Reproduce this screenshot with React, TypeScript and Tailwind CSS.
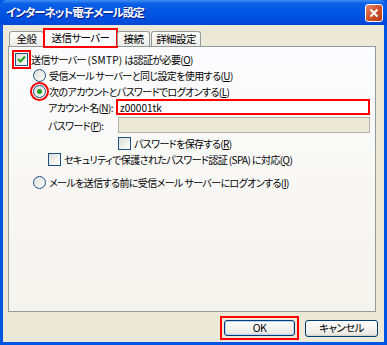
import React from "react";

const font = "font-['Noto_Sans_CJK_JP','Noto_Sans',sans-serif] [font-feature-settings:'palt']";

const Check = ({ checked = false }: { checked?: boolean }) => (
  <span className="w-[13px] h-[13px] border border-[#1c5180] bg-[linear-gradient(135deg,#dcdcd7,#ffffff)] flex items-center justify-center shrink-0">
    {checked && (
      <svg width="9" height="9" viewBox="0 0 9 9">
        <path d="M1 4 L3.5 6.5 L8 1.5" stroke="#21a121" strokeWidth="2" fill="none" />
      </svg>
    )}
  </span>
);

const Radio = ({ checked = false }: { checked?: boolean }) => (
  <span className="w-[13px] h-[13px] rounded-full border border-[#1c5180] bg-[linear-gradient(135deg,#dcdcd7,#ffffff)] flex items-center justify-center shrink-0">
    {checked && <span className="w-[5px] h-[5px] rounded-full bg-[#21a121]" />}
  </span>
);

export default function App() {
  return (
    <div className={`w-[387px] h-[345px] bg-[#0054e3] flex flex-col text-[10px] tracking-[-0.6px] text-black whitespace-nowrap ${font}`}>
      {/* title bar */}
      <div className="h-[25px] shrink-0 flex items-center justify-between pl-[6px] pr-[4px] rounded-t-[7px] bg-[linear-gradient(to_bottom,#3d8df7,#0a5fe6_15%,#0054e3_55%,#0048d8)]">
        <span className="text-white font-bold text-[11.5px] tracking-[-1px] [text-shadow:1px_1px_#0a1883]">
          インターネット電子メール設定
        </span>
        <span className="w-[18px] h-[18px] rounded-[3px] border border-white bg-[linear-gradient(135deg,#e8886a,#d2512d_50%,#b53a16)] flex items-center justify-center">
          <svg width="10" height="10" viewBox="0 0 10 10">
            <path d="M1.5 1.5 L8.5 8.5 M8.5 1.5 L1.5 8.5" stroke="white" strokeWidth="2" />
          </svg>
        </span>
      </div>

      {/* body */}
      <div className="flex-1 mx-[3px] mb-[3px] bg-[#ece9d8] flex flex-col pl-[5px] pr-[8px] pt-[4px]">
        {/* tabs */}
        <div className="flex items-end h-[17px] pl-[1px] relative z-10 text-[10.5px]">
          <div className="w-[35px] h-[15px] flex items-center justify-center border border-b-0 border-[#919b9c] rounded-t-[3px] bg-[linear-gradient(to_bottom,#ffffff,#ecebe6)]">全般</div>
          <div className="w-[73px] h-[18px] -mb-[1px] flex items-center justify-center bg-[#fcfcfe] outline-2 outline-[#ff0000] -outline-offset-1">送信サーバー</div>
          <div className="w-[33px] h-[15px] flex items-center justify-center border border-b-0 border-[#919b9c] rounded-t-[3px] bg-[linear-gradient(to_bottom,#ffffff,#ecebe6)]">接続</div>
          <div className="w-[50px] h-[15px] ml-[1px] flex items-center justify-center border border-b-0 border-[#919b9c] rounded-t-[3px] bg-[linear-gradient(to_bottom,#ffffff,#ecebe6)]">詳細設定</div>
        </div>

        {/* panel */}
        <div className="h-[266px] border border-[#919b9c] bg-[linear-gradient(to_bottom,#fcfcfe,#f4f3ee)] flex flex-col pt-[4px]">
          <div className="h-[16px] flex items-center pl-[4px]">
            <span className="p-[2px] outline-2 outline-[#ff0000] -outline-offset-1 flex">
              <Check checked />
            </span>
            <span className="ml-[1px]">送信サーバー <span className="tracking-[0.3px]">(SMTP)</span> は認証が必要(<u>O</u>)</span>
          </div>
          <div className="h-[16px] flex items-center gap-[3px] pl-[24px]">
            <Radio />
            <span>受信メール サーバーと同じ設定を使用する(<u>U</u>)</span>
          </div>
          <div className="h-[16px] flex items-center gap-[2px] pl-[23px]">
            <span className="rounded-full p-[1px] outline-2 outline-[#ff0000] flex">
              <Radio checked />
            </span>
            <span>次のアカウントとパスワードでログオンする(<u>L</u>)</span>
          </div>

          <div className="h-[16px] flex items-center pl-[39px] pr-[5px]">
            <span className="w-[68px]">アカウント名(<u>N</u>):</span>
            <div className="flex-1 h-[16px] border-2 border-[#ff0000] bg-white flex items-center px-[2px] tracking-normal">z00001tk</div>
          </div>
          <div className="h-[16px] mt-[2px] flex items-center pl-[39px] pr-[5px]">
            <span className="w-[70px]">パスワード(<u>P</u>):</span>
            <div className="flex-1 h-[16px] border border-[#b5b2a5] bg-[#ebe8d7]" />
          </div>
          <div className="h-[16px] mt-[2px] flex items-center gap-[3px] pl-[109px]">
            <Check />
            <span>パスワードを保存する(<u>R</u>)</span>
          </div>
          <div className="h-[16px] flex items-center gap-[3px] pl-[39px]">
            <Check />
            <span>セキュリティで保護されたパスワード認証 (SPA) に対応(<u>Q</u>)</span>
          </div>
          <div className="h-[16px] mt-[7px] flex items-center gap-[3px] pl-[24px]">
            <Radio />
            <span>メールを送信する前に受信メール サーバーにログオンする(<u>I</u>)</span>
          </div>
        </div>

        {/* buttons */}
        <div className="flex justify-end items-center gap-[6px] mt-[6px] -mr-[2px] text-[10.5px]">
          <div className="p-[2px] border-2 border-[#ff0000] -my-[2px]">
            <div className="w-[71px] h-[16px] rounded-[3px] border border-[#003c74] bg-[linear-gradient(to_bottom,#ffffff,#ecebe6_85%,#d6d0c5)] flex items-center justify-center shadow-[inset_0_0_0_1px_#bcd4f6]">
              OK
            </div>
          </div>
          <div className="w-[73px] h-[17px] rounded-[3px] border border-[#003c74] bg-[linear-gradient(to_bottom,#ffffff,#ecebe6_85%,#d6d0c5)] flex items-center justify-center">
            キャンセル
          </div>
        </div>
      </div>
    </div>
  );
}
